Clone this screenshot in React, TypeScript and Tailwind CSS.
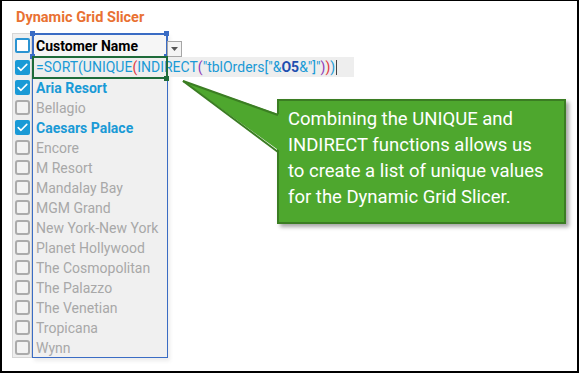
import React from "react";

const items: { name: string; checked: boolean }[] = [
  { name: "Aria Resort", checked: true },
  { name: "Bellagio", checked: false },
  { name: "Caesars Palace", checked: true },
  { name: "Encore", checked: false },
  { name: "M Resort", checked: false },
  { name: "Mandalay Bay", checked: false },
  { name: "MGM Grand", checked: false },
  { name: "New York-New York", checked: false },
  { name: "Planet Hollywood", checked: false },
  { name: "The Cosmopolitan", checked: false },
  { name: "The Palazzo", checked: false },
  { name: "The Venetian", checked: false },
  { name: "Tropicana", checked: false },
  { name: "Wynn", checked: false },
];

function Box({ checked }: { checked: boolean }) {
  if (checked) {
    return (
      <div className="w-[15px] h-[15px] rounded-[2px] bg-[#1a9ad6] flex items-center justify-center">
        <svg width="11" height="9" viewBox="0 0 11 9">
          <path d="M1.2 4.6 L4 7.3 L9.8 1.4" fill="none" stroke="white" strokeWidth="1.6" strokeLinecap="round" strokeLinejoin="round" />
        </svg>
      </div>
    );
  }
  return <div className="w-[15px] h-[15px] rounded-[3px] border-2 border-[#ababab] bg-[#f2f2f2]" />;
}

export default function App() {
  return (
    <div className="w-[579px] h-[373px] bg-white border-black border-l-2 border-t border-r-2 border-b-2 relative overflow-hidden font-['Roboto',sans-serif]">
      <div className="pl-[14px] pt-[7px] h-[32px] text-[14.5px] leading-[20px] font-bold text-[#e97132]">Dynamic Grid Slicer</div>
      <div className="pl-[10px] flex items-start">
        {/* checkbox column */}
        <div className="w-[20px] bg-[#eeeeee] border border-[#d6d6d6] flex flex-col">
          <div className="h-[23px] flex items-center justify-center">
            <div className="w-[15px] h-[15px] rounded-[2px] border-2 border-[#2b94d2] bg-white" />
          </div>
          <div className="h-[20px] flex items-center justify-center">
            <Box checked={true} />
          </div>
          {items.map((it) => (
            <div key={it.name} className="h-[20px] flex items-center justify-center">
              <Box checked={it.checked} />
            </div>
          ))}
        </div>
        {/* values column */}
        <div className="w-[136px] border border-[#3a6cc4] bg-[#f0f0f0] flex flex-col relative shadow-[2px_3px_4px_rgba(0,0,0,0.08)]">
          <div className="h-[23px] relative bg-[#f6f6f6] flex items-center pl-[3px] pt-[1px] text-[14px] font-bold text-black whitespace-nowrap">
            Customer Name
            <div className="absolute left-[-1px] top-[-1px] w-[136px] h-[25px] border-2 border-[#3a6cc4]" />
            <div className="absolute left-[-3px] top-[-3px] w-[5px] h-[5px] bg-[#3a6cc4]" />
            <div className="absolute left-[131px] top-[-3px] w-[5px] h-[5px] bg-[#3a6cc4]" />
            <div className="absolute left-[-3px] top-[20px] w-[5px] h-[5px] bg-[#3a6cc4]" />
            <div className="absolute left-[131px] top-[20px] w-[5px] h-[5px] bg-[#3a6cc4]" />
            <div className="absolute left-[134px] top-[7px] w-[15px] h-[16px] border border-[#a6a6a6] bg-[#f4f4f4] flex items-center justify-center">
              <svg width="7" height="4" viewBox="0 0 7 4">
                <path d="M0 0 L7 0 L3.5 4 Z" fill="#555" />
              </svg>
            </div>
          </div>
          <div className="h-[20px] relative">
            <div className="absolute left-0 top-0 w-[321px] h-[20px] bg-[#eeeeee] flex items-center pl-[3px] pt-[1px] text-[14px] whitespace-nowrap text-[#1a9ad6]">
              <span>=SORT(UNIQUE</span>
              <span className="text-[#e0363e]">(</span>
              <span>INDIRECT</span>
              <span className="text-[#8e3bb8]">(</span>
              <span>"tblOrders["&amp;</span>
              <span className="text-[#1f4fb0] font-bold">O5</span>
              <span>&amp;"]"</span>
              <span className="text-[#8e3bb8]">)</span>
              <span className="text-[#e0363e]">)</span>
              <span>)</span>
              <span className="ml-[1px] w-px h-[15px] bg-[#444]" />
            </div>
            <div className="absolute left-[-1px] top-[-1px] w-[136px] h-[23px] border-2 border-[#1e6b3a]" />
            <div className="absolute left-[131px] top-[19px] w-[5px] h-[5px] bg-[#1e6b3a]" />
          </div>
          {items.map((it) => (
            <div
              key={it.name}
              className={
                "h-[20px] flex items-center pl-[3px] pt-[3px] text-[14px] whitespace-nowrap " +
                (it.checked ? "font-bold text-[#1a9ad6]" : "text-[#a8a8a8]")
              }
            >
              {it.name}
            </div>
          ))}
        </div>
      </div>

      {/* callout */}
      <div className="absolute left-[275px] top-[98px] w-[289px] h-[125px] bg-[#4ea72e] border-2 border-[#3b7d23] shadow-[3px_3px_4px_rgba(0,0,0,0.35)] pl-[9px] pt-[5px] text-white text-[18.5px] leading-[26px] whitespace-nowrap">
        Combining the UNIQUE and
        <br />
        INDIRECT functions allows us
        <br />
        to create a list of unique values
        <br />
        for the Dynamic Grid Slicer.
      </div>
      <svg className="absolute left-0 top-0 pointer-events-none" width="575" height="370" viewBox="0 0 575 370">
        <polygon points="181,80 279,114 279,151" fill="#4ea72e" />
        <line x1="181" y1="80" x2="276" y2="114" stroke="#3b7d23" strokeWidth="2" />
        <line x1="181" y1="80" x2="276" y2="151" stroke="#3b7d23" strokeWidth="2" />
      </svg>
    </div>
  );
}
